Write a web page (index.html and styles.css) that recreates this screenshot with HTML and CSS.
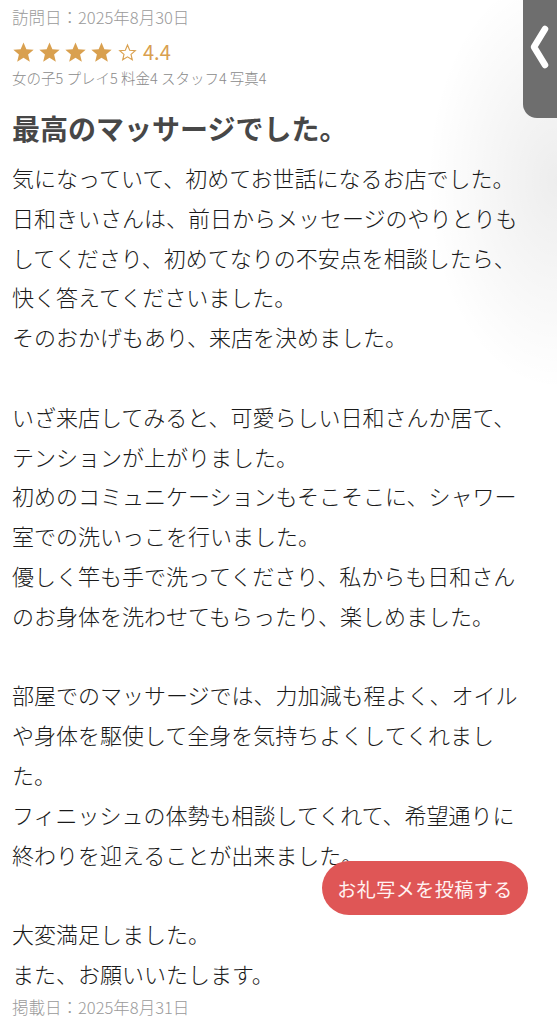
FILE: index.html
```html
<!DOCTYPE html>
<html lang="ja">
<head>
<meta charset="utf-8">
<link rel="stylesheet" href="styles.css">
</head>
<body>
<div class="page">
  <div class="visit">訪問日：2025年8月30日</div>
  <div class="rating">
    <svg class="star" viewBox="0 0 24 24"><path d="M12 1.5l3 7.1 7.6.6-5.8 5 1.8 7.4L12 17.6l-6.6 4 1.8-7.4-5.8-5 7.6-.6z"/></svg>
    <svg class="star" viewBox="0 0 24 24"><path d="M12 1.5l3 7.1 7.6.6-5.8 5 1.8 7.4L12 17.6l-6.6 4 1.8-7.4-5.8-5 7.6-.6z"/></svg>
    <svg class="star" viewBox="0 0 24 24"><path d="M12 1.5l3 7.1 7.6.6-5.8 5 1.8 7.4L12 17.6l-6.6 4 1.8-7.4-5.8-5 7.6-.6z"/></svg>
    <svg class="star" viewBox="0 0 24 24"><path d="M12 1.5l3 7.1 7.6.6-5.8 5 1.8 7.4L12 17.6l-6.6 4 1.8-7.4-5.8-5 7.6-.6z"/></svg>
    <svg class="star star-empty" viewBox="0 0 24 24"><path d="M12 3.5l2.5 5.9 6.4.5-4.9 4.2 1.5 6.2L12 17l-5.5 3.3 1.5-6.2-4.9-4.2 6.4-.5z"/></svg>
    <span class="score">4.4</span>
  </div>
  <div class="subscores">女の子5 プレイ5 料金4 スタッフ4 写真4</div>
  <h1 class="title">最高のマッサージでした。</h1>
  <p class="body-text">気になっていて、初めてお世話になるお店でした。<br>日和きいさんは、前日からメッセージのやりとりもしてくださり、初めてなりの不安点を相談したら、快く答えてくださいました。<br>そのおかげもあり、来店を決めました。<br><br>いざ来店してみると、可愛らしい日和さんか居て、テンションが上がりました。<br>初めのコミュニケーションもそこそこに、シャワー室での洗いっこを行いました。<br>優しく竿も手で洗ってくださり、私からも日和さんのお身体を洗わせてもらったり、楽しめました。<br><br>部屋でのマッサージでは、力加減も程よく、オイルや身体を駆使して全身を気持ちよくしてくれました。<br>フィニッシュの体勢も相談してくれて、希望通りに終わりを迎えることが出来ました。<br><br>大変満足しました。<br>また、お願いいたします。</p>
  <div class="posted">掲載日：2025年8月31日</div>
</div>
<div class="side-tab">
  <svg class="chevron" viewBox="0 0 34 118"><path d="M22 29 L11 47 L22 65"/></svg>
</div>
<div class="side-shade"></div>
<a class="photo-btn">お礼写メを投稿する</a>
</body>
</html>
```

FILE: styles.css
```css
html, body {
  margin: 0;
  padding: 0;
  background: #ffffff;
}
body {
  font-family: "Noto Sans CJK JP", "Noto Sans", sans-serif;
  width: 557px;
  height: 1024px;
  overflow: hidden;
  position: relative;
}
.page {
  padding: 7px 30px 0 12px;
}
.visit {
  font-size: 16.5px;
  line-height: 20px;
  color: #9a9a9a;
  font-weight: 300;
}
.rating {
  display: flex;
  align-items: center;
  height: 24px;
  margin-top: 13px;
  gap: 3px;
}
.star {
  width: 23px;
  height: 23px;
  fill: #d9a04f;
}
.star-empty {
  width: 21px;
  height: 21px;
  fill: none;
  stroke: #d9a04f;
  stroke-width: 1.3;
  margin-left: 1px;
}
.score {
  font-size: 20px;
  color: #d9a04f;
  margin-left: 2px;
  line-height: 24px;
}
.subscores {
  margin-top: 4px;
  font-size: 14.5px;
  line-height: 20px;
  color: #8a8a8a;
  font-weight: 300;
}
.title {
  margin: 20px 0 0;
  font-size: 28px;
  line-height: 40px;
  font-weight: bold;
  color: #474747;
}
.body-text {
  margin: 10px 0 0;
  font-size: 22px;
  line-height: 39.8px;
  color: #1a1a1a;
  font-weight: 300;
}
.posted {
  margin-top: 3px;
  font-size: 16.5px;
  line-height: 20px;
  color: #9a9a9a;
  font-weight: 300;
}
.side-tab {
  position: absolute;
  top: 0;
  right: 0;
  width: 34px;
  height: 118px;
  background: #6e6e6e;
  border-bottom-left-radius: 14px;
  z-index: 2;
}
.side-shade {
  position: absolute;
  top: 0;
  right: 0;
  width: 160px;
  height: 400px;
  background: radial-gradient(ellipse 130px 210px at 100% 180px, rgba(0, 0, 0, 0.07), rgba(0, 0, 0, 0));
  pointer-events: none;
  z-index: 1;
}
.chevron {
  display: block;
  width: 34px;
  height: 118px;
  fill: none;
  stroke: #ffffff;
  stroke-width: 6.5;
  stroke-linecap: round;
  stroke-linejoin: round;
}
.photo-btn {
  position: absolute;
  right: 29px;
  bottom: 109px;
  width: 206px;
  height: 54px;
  border-radius: 27px;
  background: #df5656;
  color: #fff2f2;
  font-size: 19px;
  display: flex;
  align-items: center;
  justify-content: center;
  letter-spacing: 0.5px;
  z-index: 3;
}
```
